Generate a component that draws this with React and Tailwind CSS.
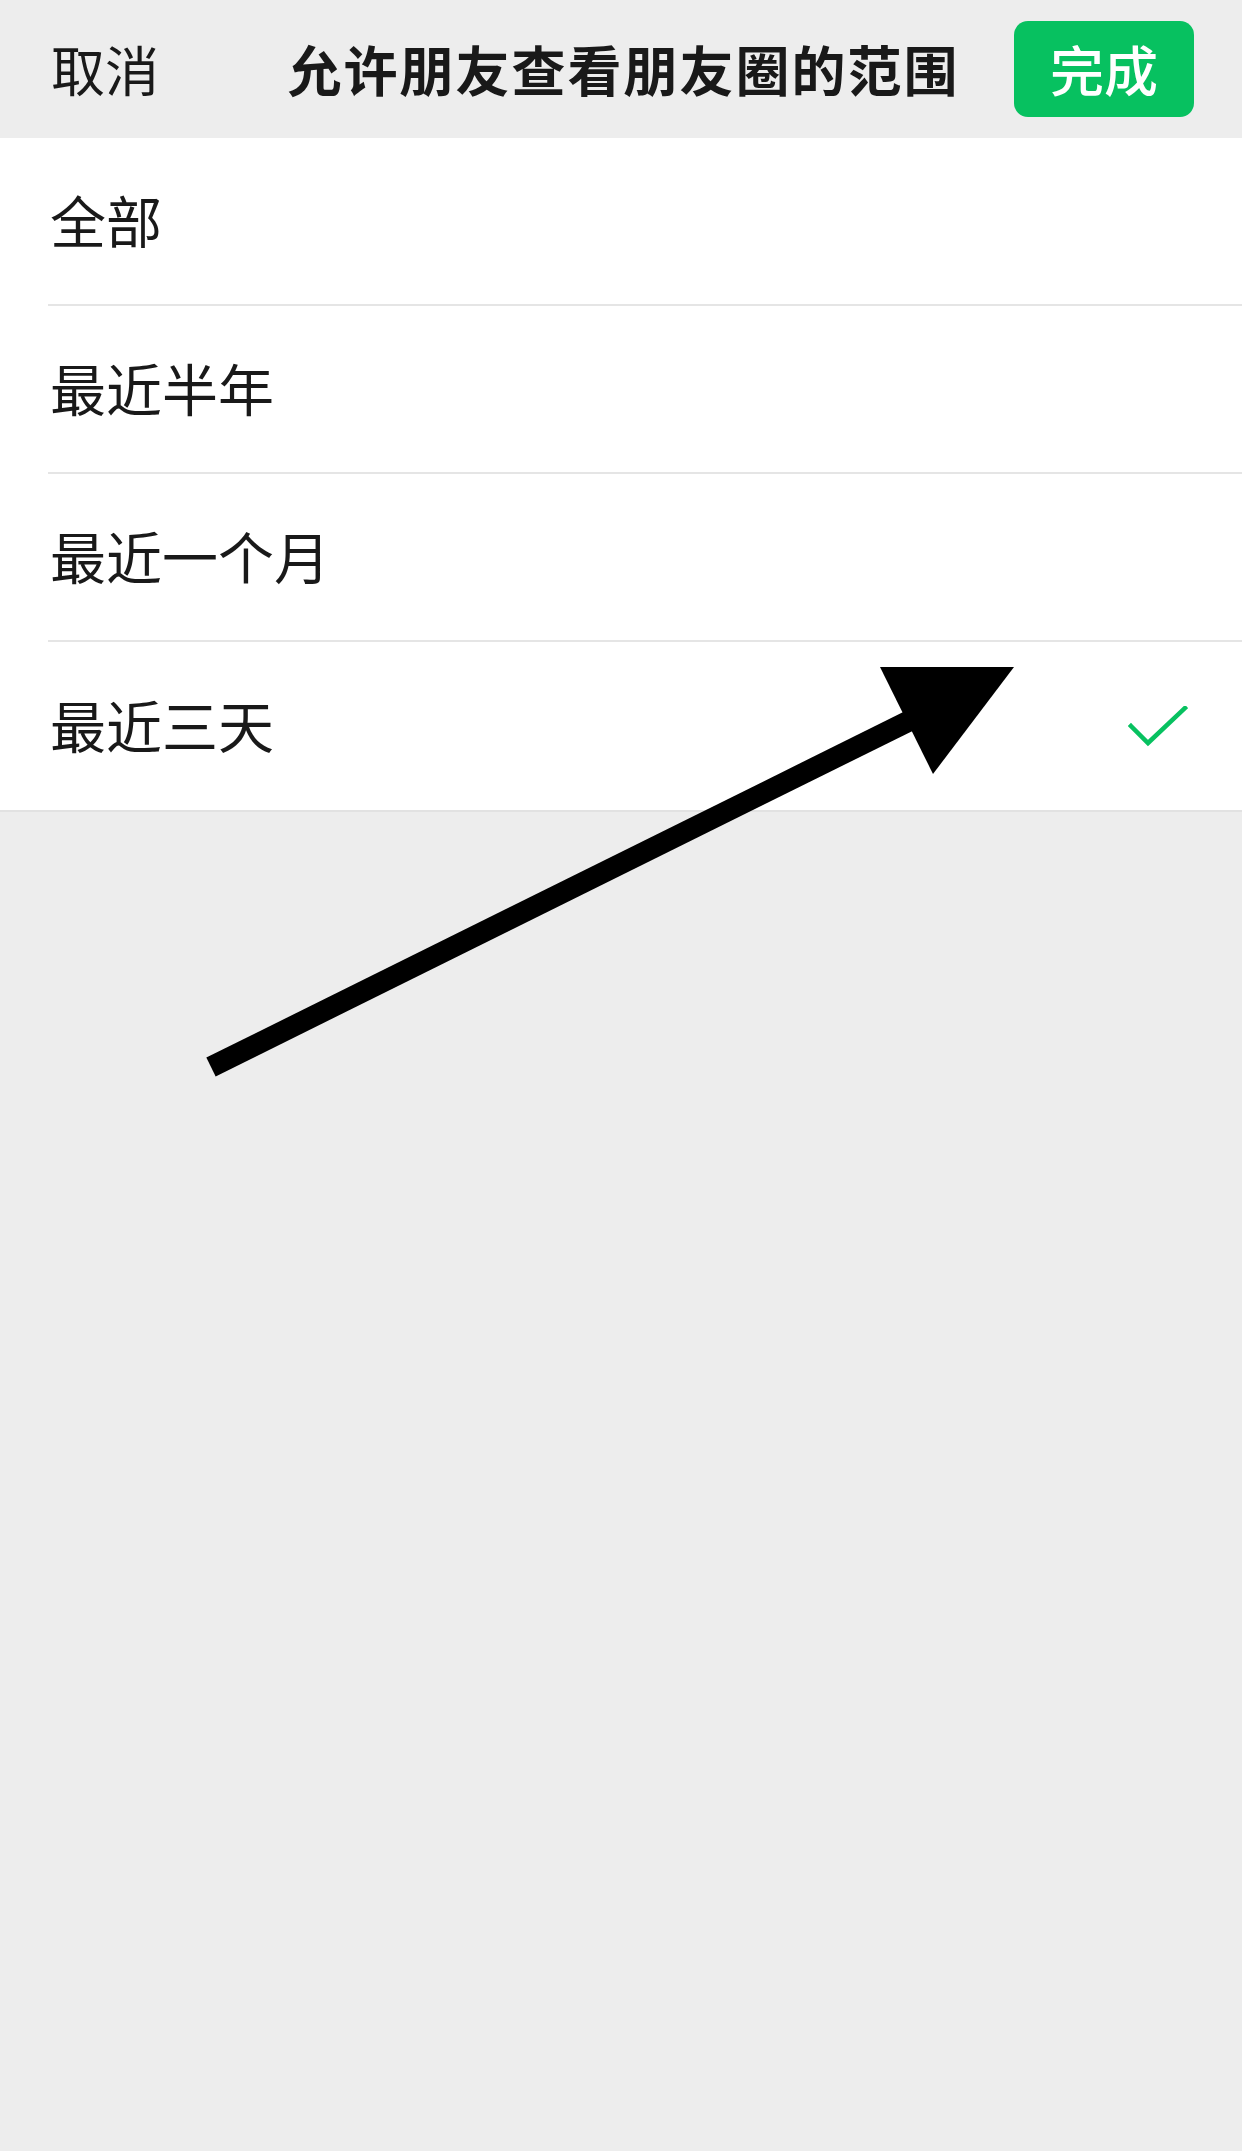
import { useState } from "react";

const options = ["全部", "最近半年", "最近一个月", "最近三天"];

export default function App() {
  const [selected, setSelected] = useState(3);

  return (
    <div
      className="relative min-h-[2151px] w-full bg-[#ededed] text-[#191919]"
      style={{ fontFamily: '"Noto Sans CJK SC", "Noto Sans", sans-serif' }}
    >
      {/* Header */}
      <div className="grid h-[138px] grid-cols-[1fr_auto_1fr] items-center pl-[51px] pr-[48px]">
        <div className="text-[54px] leading-none">取消</div>
        <div className="pl-[2px] text-[54px] font-bold leading-none tracking-[2px]">
          允许朋友查看朋友圈的范围
        </div>
        <div className="flex justify-end">
          <button className="flex h-[96px] w-[180px] items-center justify-center rounded-[14px] bg-[#07c160] text-[54px] font-medium leading-none text-white">
            完成
          </button>
        </div>
      </div>

      {/* Options */}
      <div className="border-b-2 border-[#e2e2e2] bg-white">
        {options.map((label, i) => (
          <div
            key={label}
            onClick={() => setSelected(i)}
            className="pl-[48px]"
          >
            <div
              className={
                "flex h-[168px] items-center justify-between pb-[5px] pl-[2px] pr-[54px] " +
                (i < options.length - 1 ? "border-b-2 border-[#e5e5e5]" : "")
              }
            >
              <span className="text-[56px] leading-none">{label}</span>
              {selected === i && (
                <svg className="mt-[9px]" width="60" height="44" viewBox="0 0 60 44" fill="none">
                  <path
                    d="M3 20 L20 37 L57 2"
                    stroke="#07c160"
                    strokeWidth="4.5"
                    strokeLinecap="square"
                  />
                </svg>
              )}
            </div>
          </div>
        ))}
      </div>

      {/* Annotation arrow */}
      <svg
        className="pointer-events-none absolute left-0 top-0"
        width="1242"
        height="2151"
        viewBox="0 0 1242 2151"
      >
        <line x1="211" y1="1067" x2="915" y2="718" stroke="#000" strokeWidth="21" />
        <polygon points="880,667 1014,667 933,774" fill="#000" />
      </svg>
    </div>
  );
}
